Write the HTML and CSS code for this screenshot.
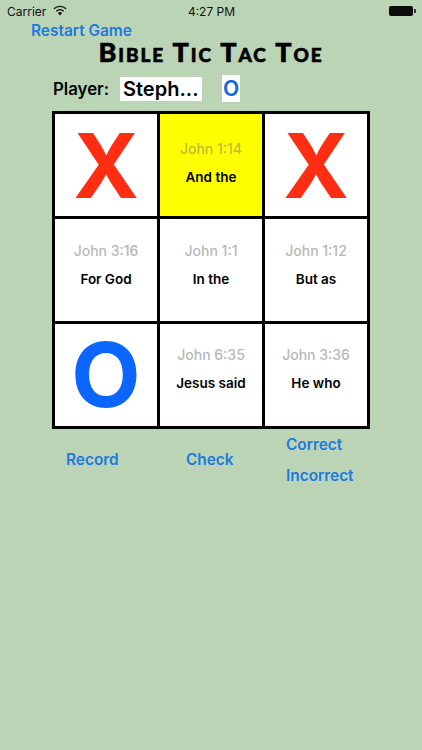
FILE: index.html
```html
<!DOCTYPE html>
<html lang="en">
<head>
<meta charset="utf-8">
<title>Bible Tic Tac Toe</title>
<link rel="stylesheet" href="styles.css">
</head>
<body>
<div class="status">
  <div class="status-left">
    <span>Carrier</span>
    <svg class="wifi" width="14" height="11" viewBox="0 0 14 11"><path d="M7 10.5 4.9 8a3.2 3.2 0 0 1 4.2 0z" fill="#111"/><path d="M3.3 6.2a5.4 5.4 0 0 1 7.4 0M1 3.7a8.8 8.8 0 0 1 12 0" fill="none" stroke="#111" stroke-width="1.4"/></svg>
  </div>
  <div class="status-time">4:27 PM</div>
  <div class="status-right">
    <span class="battery"></span><span class="battery-tip"></span>
  </div>
</div>
<div class="restart-row"><a class="link">Restart Game</a></div>
<h1 class="title">Bible Tic Tac Toe</h1>
<div class="player-row">
  <span class="player-label">Player:</span>
  <span class="player-name">Steph...</span>
  <span class="player-mark">O</span>
</div>
<div class="board">
  <div class="cell"><span class="mark x">X</span></div>
  <div class="cell active r1"><span class="ref">John 1:14</span><span class="verse">And the</span></div>
  <div class="cell"><span class="mark x">X</span></div>
  <div class="cell r2"><span class="ref">John 3:16</span><span class="verse">For God</span></div>
  <div class="cell r2"><span class="ref">John 1:1</span><span class="verse">In the</span></div>
  <div class="cell r2"><span class="ref">John 1:12</span><span class="verse">But as</span></div>
  <div class="cell"><span class="mark o">O</span></div>
  <div class="cell r3"><span class="ref">John 6:35</span><span class="verse">Jesus said</span></div>
  <div class="cell r3"><span class="ref">John 3:36</span><span class="verse">He who</span></div>
</div>
<div class="actions">
  <a class="link record">Record</a>
  <a class="link check">Check</a>
  <div class="grade">
    <a class="link">Correct</a>
    <a class="link">Incorrect</a>
  </div>
</div>
</body>
</html>
```
FILE: styles.css
```css
* { box-sizing: border-box; }
html, body { margin: 0; height: 750px; overflow: hidden; }
body {
  background: #bbd4b6;
  font-family: Inter, "Liberation Sans", sans-serif;
  color: #000;
}
.status {
  height: 22px;
  display: grid;
  grid-template-columns: 1fr auto 1fr;
  align-items: center;
  padding: 0 6px 0 7px;
  font-size: 12px;
  color: #111;
}
.status-left { display: flex; align-items: center; gap: 7px; }
.wifi { margin-top: -2px; }
.status-right { display: flex; justify-content: flex-end; align-items: center; }
.battery { width: 24px; height: 10px; background: #0c0c0c; border-radius: 2px; }
.battery-tip { width: 2px; height: 4px; background: #333; margin-left: 1px; border-radius: 0 1px 1px 0; }
.link { color: #1c7ae0; font-weight: 600; font-size: 15.4px; line-height: 18px; display: block; }
.restart-row { padding-left: 31px; height: 18px; }
.title {
  margin: 0;
  height: 24px;
  text-align: center;
  font-family: Lato, sans-serif;
  font-variant: small-caps;
  font-weight: 900;
  font-size: 27px;
  line-height: 24px;
  letter-spacing: 1.9px;
  -webkit-text-stroke: 0.6px #000;
}
.player-row {
  height: 27px;
  margin-top: 11px;
  padding-left: 53px;
  display: flex;
  align-items: center;
}
.player-label { width: 67px; font-size: 16.8px; font-weight: 600; padding-top: 1px; }
.player-name {
  width: 82px;
  height: 24px;
  background: #fff;
  font-size: 20px;
  font-weight: 600;
  line-height: 25px;
  padding-left: 3px;
}
.player-mark {
  width: 18px;
  height: 27px;
  margin-left: 20px;
  background: #fff;
  color: #0f65e8;
  font-size: 21px;
  font-weight: 600;
  line-height: 27px;
  text-align: center;
}
.board {
  width: 318px;
  height: 318px;
  margin: 9px 0 0 52px;
  padding: 3px;
  background: #000;
  display: grid;
  grid-template-columns: repeat(3, 102px);
  grid-template-rows: repeat(3, 102px);
  gap: 3px;
}
.cell {
  background: #fff;
  display: flex;
  flex-direction: column;
  align-items: center;
  justify-content: center;
}
.cell.active { background: #ffff00; }
.cell.r1, .cell.r2, .cell.r3 { justify-content: flex-start; }
.cell.r1 { padding-top: 26px; }
.cell.r2 { padding-top: 23px; }
.cell.r3 { padding-top: 22px; }
.ref { color: #b8b8b8; font-size: 14px; font-weight: 500; line-height: 18px; margin-bottom: 10px; }
.active .ref { color: #bdbd3c; }
.verse { font-size: 13.5px; font-weight: 600; line-height: 18px; }
.mark { line-height: 1; }
.x { color: #ff2d12; font-size: 89px; font-weight: 700; }
.o { color: #0a66ff; font-size: 90px; font-weight: 700; }
.actions {
  display: flex;
  align-items: center;
  padding-left: 66px;
  margin-top: 5px;
}
.record { width: 120px; }
.check { width: 100px; }
.grade { display: flex; flex-direction: column; gap: 13px; padding-top: 2px; }
```
